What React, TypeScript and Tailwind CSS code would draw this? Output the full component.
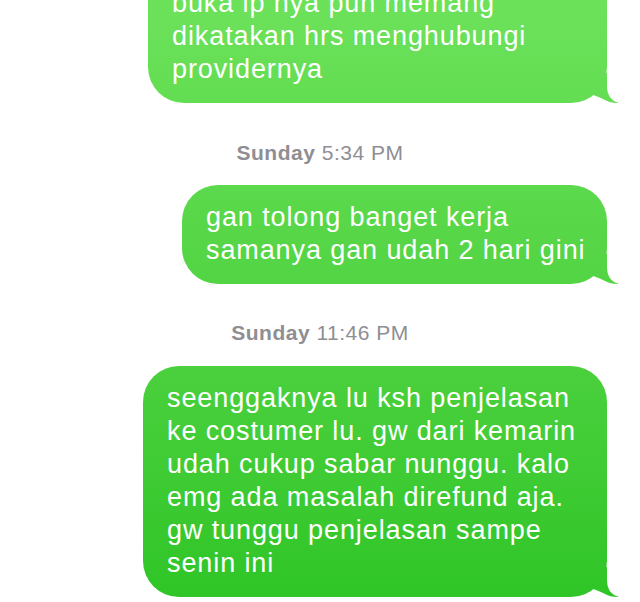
const tailPath =
  "[clip-path:path('M10,0_L26,0_L26,13_C26,22_30,28_38,30_C33,30.5_28,29_24,27_C20,25_16,23_12,22_Z')]"

function Bubble({ lines, width, top = 'pt-[16px]' }: { lines: string[]; width: string; top?: string }) {
  return (
    <div className="flex justify-end pr-[33px]">
      <div
        className={`relative ${width} ${top} pb-[17px] pl-[24px] rounded-[36px] bg-linear-to-b from-[#6ce25a] to-[#2ec526] bg-fixed text-white text-[27px] leading-[33px] tracking-[0.9px]`}
      >
        {lines.map((l, i) => (
          <div key={i} className="whitespace-nowrap">
            {l}
          </div>
        ))}
        {/* tail */}
        <div
          className={`absolute bottom-0 -right-[14px] w-[40px] h-[30px] bg-linear-to-b from-[#6ce25a] to-[#2ec526] bg-fixed ${tailPath}`}
        />
      </div>
    </div>
  )
}

function Stamp({ day, time }: { day: string; time: string }) {
  return (
    <div className="text-center text-[21px] leading-[24px] tracking-[0.5px] text-[#8e8e93]">
      <span className="font-bold">{day}</span> {time}
    </div>
  )
}

export default function App() {
  return (
    <div
      className="h-[602px] w-[640px] overflow-hidden bg-white flex flex-col justify-end pb-[5px]"
      style={{ fontFamily: '"Liberation Sans", Arial, sans-serif' }}
    >
      <Bubble
        width="w-[459px]"
        top="pt-[60px]"
        lines={['buka ip nya pun memang', 'dikatakan hrs menghubungi', 'providernya']}
      />
      <div className="mt-[38px] mb-[20px]">
        <Stamp day="Sunday" time="5:34 PM" />
      </div>
      <Bubble width="w-[425px]" lines={['gan tolong banget kerja', 'samanya gan udah 2 hari gini']} />
      <div className="mt-[37px] mb-[21px]">
        <Stamp day="Sunday" time="11:46 PM" />
      </div>
      <Bubble
        width="w-[464px]"
        lines={[
          'seenggaknya lu ksh penjelasan',
          'ke costumer lu. gw dari kemarin',
          'udah cukup sabar nunggu. kalo',
          'emg ada masalah direfund aja.',
          'gw tunggu penjelasan sampe',
          'senin ini',
        ]}
      />
    </div>
  )
}
